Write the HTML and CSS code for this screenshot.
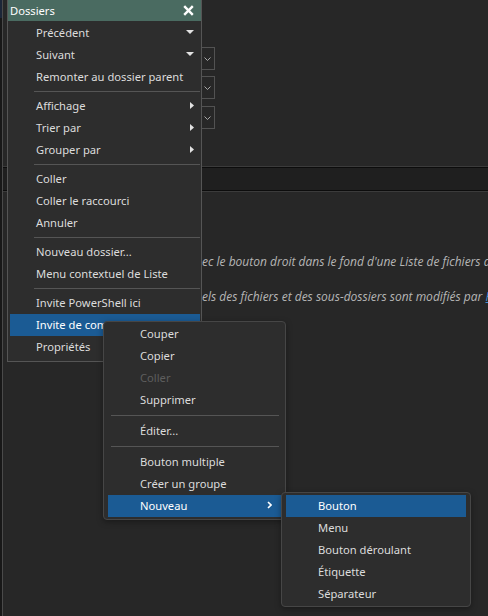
FILE: index.html
```html
<!DOCTYPE html>
<html lang="fr">
<head>
<meta charset="utf-8">
<title>Dossiers</title>
<link rel="stylesheet" href="styles.css">
</head>
<body>
<div class="app">
  <div class="edge"><div class="edge-top"></div></div>
  <div class="main">
    <div class="combos">
      <div class="combo"><svg class="chev" width="7" height="4" viewBox="0 0 7 4"><polyline points="0.5,0.5 3.5,3.5 6.5,0.5" /></svg></div>
      <div class="combo"><svg class="chev" width="7" height="4" viewBox="0 0 7 4"><polyline points="0.5,0.5 3.5,3.5 6.5,0.5" /></svg></div>
      <div class="combo third"><svg class="chev" width="7" height="4" viewBox="0 0 7 4"><polyline points="0.5,0.5 3.5,3.5 6.5,0.5" /></svg></div>
    </div>
    <div class="band"></div>
    <div class="notes">
      <p>ec le bouton droit dans le fond d'une Liste de fichiers de Directory Opus</p>
      <p>els des fichiers et des sous-dossiers sont modifiés par <a class="link">PowerShell</a></p>
    </div>
  </div>
</div>

<div class="menu dossiers">
  <div class="menu-head">
    <span>Dossiers</span>
    <svg class="close" width="11" height="11" viewBox="0 0 11 11"><line x1="1.2" y1="1.2" x2="9.8" y2="9.8"/><line x1="9.8" y1="1.2" x2="1.2" y2="9.8"/></svg>
  </div>
  <div class="menu-body">
    <div class="item">Précédent<svg class="arrow" width="8" height="4" viewBox="0 0 8 4"><polygon points="0,0 8,0 4,4"/></svg></div>
    <div class="item">Suivant<svg class="arrow" width="8" height="4" viewBox="0 0 8 4"><polygon points="0,0 8,0 4,4"/></svg></div>
    <div class="item">Remonter au dossier parent</div>
    <div class="sep"></div>
    <div class="item">Affichage<svg class="arrow" width="4" height="7" viewBox="0 0 4 7"><polygon points="0,0 4,3.5 0,7"/></svg></div>
    <div class="item">Trier par<svg class="arrow" width="4" height="7" viewBox="0 0 4 7"><polygon points="0,0 4,3.5 0,7"/></svg></div>
    <div class="item">Grouper par<svg class="arrow" width="4" height="7" viewBox="0 0 4 7"><polygon points="0,0 4,3.5 0,7"/></svg></div>
    <div class="sep"></div>
    <div class="item">Coller</div>
    <div class="item">Coller le raccourci</div>
    <div class="item">Annuler</div>
    <div class="sep"></div>
    <div class="item">Nouveau dossier...</div>
    <div class="item">Menu contextuel de Liste</div>
    <div class="sep"></div>
    <div class="item">Invite PowerShell ici</div>
    <div class="item active">Invite de commande ici</div>
    <div class="item">Propriétés</div>
  </div>
</div>

<div class="menu sub1">
  <div class="item">Couper</div>
  <div class="item">Copier</div>
  <div class="item disabled">Coller</div>
  <div class="item">Supprimer</div>
  <div class="sep"></div>
  <div class="item">Éditer...</div>
  <div class="sep"></div>
  <div class="item">Bouton multiple</div>
  <div class="item">Créer un groupe</div>
  <div class="item active">Nouveau<svg class="arrow chevr" width="5" height="8" viewBox="0 0 5 8"><polyline points="1,1 4,4 1,7"/></svg></div>
</div>

<div class="menu sub2">
  <div class="item active">Bouton</div>
  <div class="item">Menu</div>
  <div class="item">Bouton déroulant</div>
  <div class="item">Étiquette</div>
  <div class="item">Séparateur</div>
</div>
</body>
</html>
```

FILE: styles.css
```css
html, body {
  margin: 0;
  padding: 0;
}

body {
  width: 488px;
  height: 616px;
  overflow: hidden;
  position: relative;
  background: #272727;
  font-family: "Noto Sans", "Open Sans", sans-serif;
  font-size: 11.2px;
  color: #dcdcdc;
}

.app {
  display: flex;
  height: 616px;
}

.edge {
  width: 2px;
  background: #181818;
  border-right: 1px solid #4a4a4a;
}

.edge-top {
  height: 18px;
  background: #1c2638;
}

.main {
  flex: 1;
  overflow: hidden;
}

.combos {
  display: flex;
  flex-direction: column;
  gap: 6px;
  padding-top: 47px;
  margin-left: 147px;
  width: 65px;
}

.combo {
  box-sizing: border-box;
  height: 23px;
  border: 1px solid #525252;
  display: flex;
  align-items: center;
  justify-content: flex-end;
  padding-right: 3px;
}

.combo.third {
  margin-top: 1px;
}

.chev polyline {
  fill: none;
  stroke: #a8a8a8;
  stroke-width: 1;
}

.band {
  margin-top: 37px;
  height: 26px;
  box-sizing: border-box;
  border-top: 1px solid #3b3b3b;
  border-bottom: 1px solid #3b3b3b;
  background: #1f1f1f;
  box-shadow: inset 0 1px #0c0c0c, inset 0 -1px #0c0c0c;
}

.notes {
  margin-top: 60px;
  margin-left: 199px;
  white-space: nowrap;
  font-family: "Open Sans", "Noto Sans", sans-serif;
  font-size: 12px;
  font-style: italic;
  color: #b6b6b6;
  display: flex;
  flex-direction: column;
  gap: 15px;
}

.notes p {
  margin: 0;
  line-height: 20px;
}

.link {
  color: #3f8fdc;
  text-decoration: underline;
}

/* Menus */
.menu {
  position: absolute;
  box-sizing: border-box;
  background: #2d2d2d;
  color: #dcdcdc;
}

.dossiers {
  left: 7px;
  top: 0;
  width: 195px;
  border: 1px solid #555555;
  border-top: none;
  padding-bottom: 3px;
  z-index: 1;
}

.menu-head {
  height: 21px;
  background: #4a6b61;
  color: #ffffff;
  display: flex;
  align-items: center;
  justify-content: space-between;
  padding: 0 7px 1px 2px;
  box-sizing: border-box;
}

.close line {
  stroke: #ffffff;
  stroke-width: 2.4;
}

.menu-body {
  padding-top: 1px;
}

.item {
  box-sizing: border-box;
  height: 22px;
  padding-bottom: 2px;
  display: flex;
  align-items: center;
  white-space: nowrap;
  overflow: hidden;
}

.dossiers .item {
  margin: 0 1px 0 2px;
  padding-left: 26px;
  padding-right: 6px;
}

.arrow {
  margin-left: auto;
  flex: none;
}

.arrow polygon {
  fill: #e2e2e2;
}

.item.active {
  background: #1b5b94;
  color: #ffffff;
}

.item.disabled {
  color: #5e5e5e;
}

.dossiers .sep {
  height: 1px;
  margin: 3px 1px 3px 26px;
  background: #555555;
}

.sub1 {
  left: 103px;
  top: 321px;
  width: 183px;
  border: 1px solid #464646;
  border-radius: 4px;
  padding: 1px 0 2px;
  z-index: 2;
  box-shadow: 0 2px 6px rgba(0, 0, 0, 0.35);
}

.sub1 .item {
  margin: 0 2px 0 4px;
  padding-left: 32px;
  padding-right: 11px;
}

.sub1 .sep {
  height: 1px;
  margin: 4px 6px 4px 7px;
  background: #555555;
}

.chevr polyline {
  fill: none;
  stroke: #ffffff;
  stroke-width: 1.6;
}

.sub2 {
  left: 281px;
  top: 492px;
  width: 190px;
  border: 1px solid #464646;
  border-radius: 4px;
  padding: 2px 0 1px;
  z-index: 3;
  box-shadow: 0 2px 6px rgba(0, 0, 0, 0.35);
}

.sub2 .item {
  margin: 0 4px;
  padding-left: 32px;
  padding-right: 8px;
}
```
